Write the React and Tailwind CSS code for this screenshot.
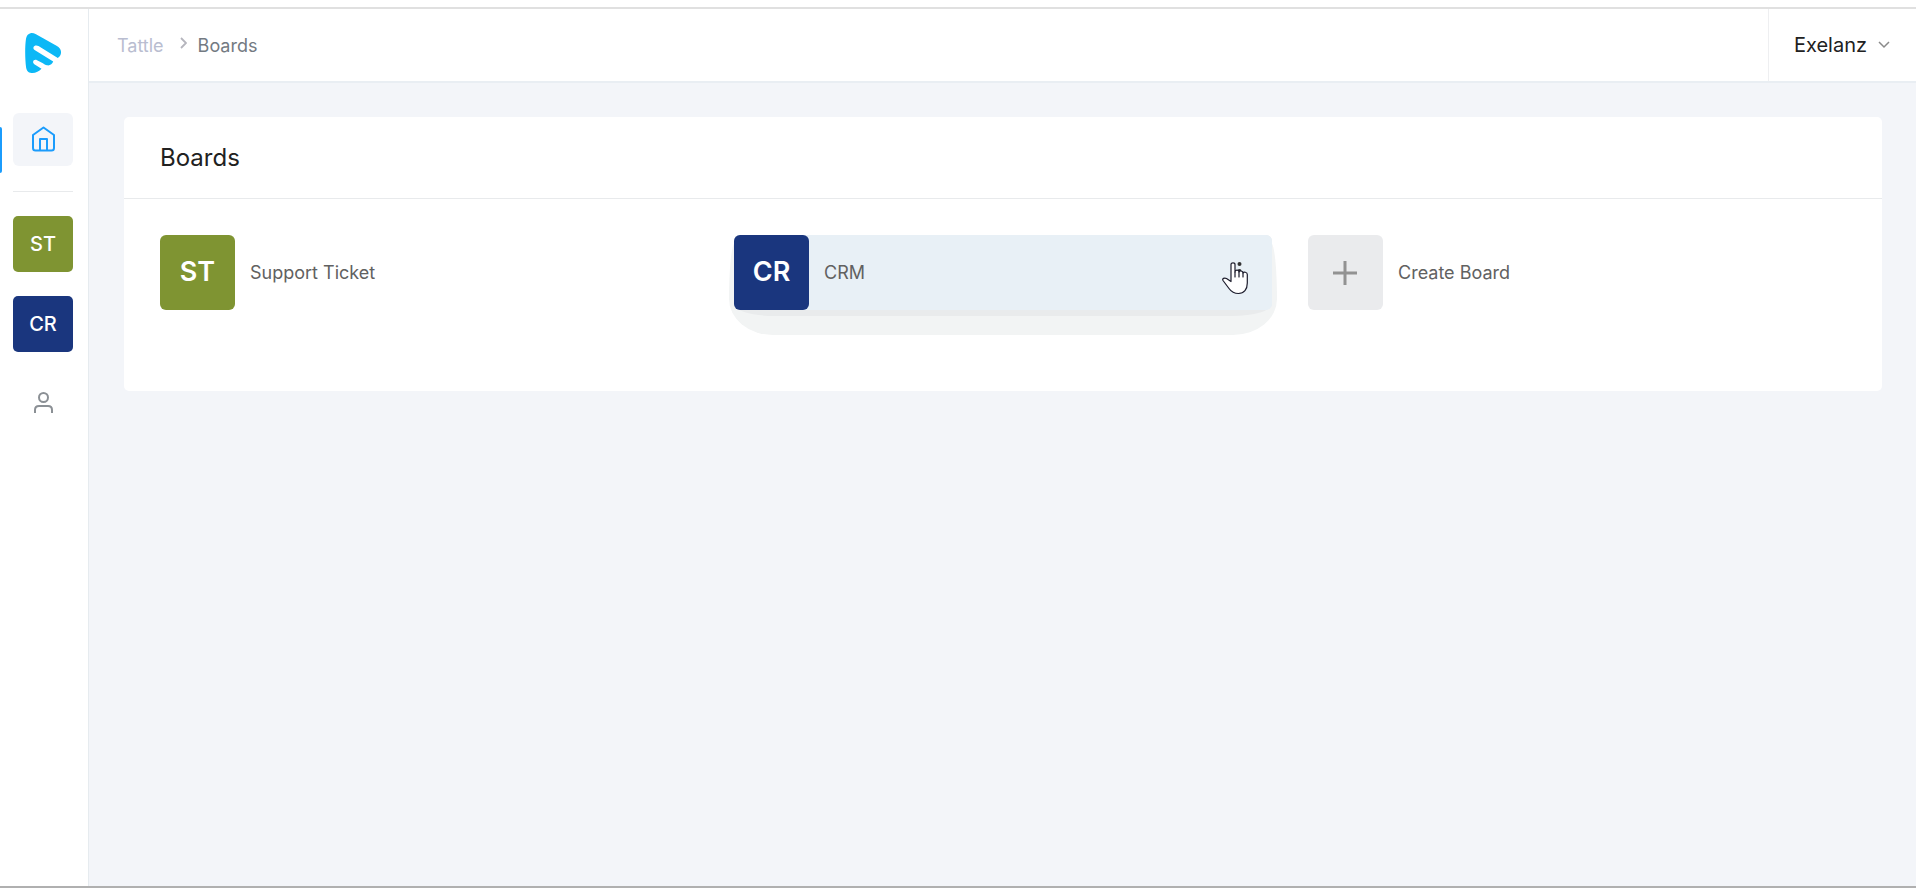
const boards = [
  { id: 1, short: 'ST', name: 'Support Ticket', color: 'bg-[#7f9432]' },
  { id: 2, short: 'CR', name: 'CRM', color: 'bg-[#1a367e]', active: true },
]

function Logo() {
  return (
    <svg width="36" height="40" viewBox="0 0 36 40" aria-hidden="true">
      <path
        fill="#0cb8f6"
        d="M5.500 0.200 C7 -0.200 9 0.200 11 1.300 L31.500 12.800 C35 14.800 36.200 17 36 20 C35.800 22.300 34.500 24 32.800 24.900 L13.500 13 C11.500 11.900 9 12.400 8.500 14.300 C8.200 15.600 8.800 16.500 10 17.300 L28.200 28.600 C27.300 31 24.800 33 22 32.300 C20.500 32 19 31 17.500 30 L12 27.200 C10 26.300 8.200 27.200 8.100 29 C8.100 30 8.700 30.800 9.700 31.500 L16.500 35.700 C14 38.300 10 40.200 6.500 40 C3 39.800 1.600 37.500 1.100 34.500 C0 26 -0.200 14 1 5.800 C1.500 2.700 3 0.700 5.500 0.200 Z"
      />
    </svg>
  )
}

function HomeIcon() {
  return (
    <svg width="23" height="27" viewBox="0 0 23 27" fill="none" stroke="#1b9cfc" strokeWidth="2" strokeLinejoin="round" aria-hidden="true">
      <path d="M1 9 L11.500 1.500 L22 9 V22 Q22 24.500 19.500 24.500 H3.500 Q1 24.500 1 22 Z" />
      <path d="M8 24 V13 H15 V24" />
    </svg>
  )
}

function UserIcon() {
  return (
    <svg width="19" height="22" viewBox="0 0 19 22" fill="none" stroke="#8b9095" strokeWidth="2" aria-hidden="true">
      <circle cx="9.500" cy="5.500" r="4.500" />
      <path d="M1 21 V18 Q1 14 5 14 H14 Q18 14 18 18 V21" />
    </svg>
  )
}

function PlusIcon() {
  return (
    <svg width="25" height="25" viewBox="0 0 25 25" stroke="#929292" strokeWidth="3" aria-hidden="true">
      <path d="M12 1 V25 M0 13 H24" />
    </svg>
  )
}

function HandCursor() {
  return (
    <svg className="absolute right-6 top-[27px]" width="26" height="33" viewBox="0 0 26 33" aria-hidden="true">
      <circle cx="17.500" cy="2" r="2" fill="#333" />
      <circle cx="17.500" cy="9" r="2" fill="#333" />
      <path
        fill="#fff"
        stroke="#1b1b2b"
        strokeWidth="1.200"
        strokeLinejoin="round"
        strokeLinecap="round"
        d="M9 19.500 V2.500 C9 0.200 13 0.200 13 2.500 V10 C13 7.500 17 7.500 17 10 C17 8.500 21 8.500 21 11 C21.500 9.500 25.300 10 25.300 12.500 V21 C25.300 27.500 22 31.500 16.500 31.500 C12.500 31.500 9.500 30 7 26.500 L1 18.500 C-0.200 16.500 2.500 15.500 4.500 16.500 Z"
      />
      <path stroke="#1b1b2b" strokeWidth="1.200" strokeLinecap="round" d="M13 10 V15 M17 10 V15 M21 11 V15" />
    </svg>
  )
}

function Sidebar() {
  return (
    <aside className="w-[89px] shrink-0 flex flex-col bg-white border-r border-[#e6ebef] pl-[13px] pr-[15px] pt-6">
      <a href="#" aria-label="Tattle" className="pl-3">
        <Logo />
      </a>
      <nav className="relative mt-10 flex flex-col">
        <span className="absolute -left-[13px] top-[14px] w-0.5 h-[46px] rounded-r-sm bg-[#1b9cfc]" />
        <a href="#" aria-label="Home" className="h-[53px] flex items-center justify-center rounded-md bg-[#f3f5f9]">
          <HomeIcon />
        </a>
        <hr className="mt-[25px] border-[#e8eaec]" />
        <div className="mt-6 flex flex-col gap-6">
          {boards.map((b) => (
            <a key={b.id} href="#" className={`h-14 flex items-center justify-center rounded-[5px] text-xl font-medium text-white ${b.color}`}>
              {b.short}
            </a>
          ))}
        </div>
        <a href="#" aria-label="Profile" className="mt-10 flex justify-center">
          <UserIcon />
        </a>
      </nav>
    </aside>
  )
}

function Header() {
  return (
    <header className="h-[74px] flex bg-white border-b-2 border-[#e9eef3]">
      <nav aria-label="Breadcrumb" className="flex-1 flex items-center pl-7 pt-0.5 text-lg">
        <a href="#" className="text-[#b9bdd0]">Tattle</a>
        <svg className="ml-4 mr-[11px] mb-1.5" width="7" height="12" viewBox="0 0 7 12" fill="none" stroke="#b5b5bd" strokeWidth="1.800" aria-hidden="true">
          <path d="M1 1 L6 6 L1 11" />
        </svg>
        <span className="text-[#737a82]">Boards</span>
      </nav>
      <button type="button" className="flex items-center gap-[11px] border-l border-[#eeeff1] pl-[25px] pr-[26px] text-xl text-[#212121]">
        Exelanz
        <svg width="12" height="8" viewBox="0 0 12 8" fill="none" stroke="#8a8a8a" strokeWidth="1.500" aria-hidden="true">
          <path d="M1 1 L6 6 L11 1" />
        </svg>
      </button>
    </header>
  )
}

// two flat layers under the hovered tile
function TileShadow() {
  return (
    <>
      <span className="absolute -z-10 -inset-x-[5px] top-2 -bottom-[25px] rounded-[6px_6px_44px_44px/56px_56px_36px_36px] bg-[#f2f4f4]" />
      <span className="absolute -z-10 inset-x-0 top-0 -bottom-1.5 rounded-[6px_6px_40px_40px/6px_6px_12px_12px] bg-[#e9ebec]" />
      <span className="absolute -z-10 inset-0 rounded-md bg-[#e8f0f6]" />
    </>
  )
}

export default function App() {
  return (
    <div className="min-h-screen flex flex-col bg-[#f3f5f9] font-['Inter',sans-serif]">
      <div className="h-[9px] shrink-0 bg-white border-b-2 border-[#e0e0e0]" />
      <div className="flex-1 flex">
        <Sidebar />
        <div className="flex-1 flex flex-col">
          <Header />
          <main className="pl-[35px] pr-[34px] pt-[34px]">
            <section className="rounded-[5px] bg-white">
              <h1 className="h-[82px] flex items-center px-9 border-b border-[#e8eaec] text-2xl text-[#212121]">Boards</h1>
              <div className="grid grid-cols-3 gap-9 px-9 pt-9 pb-[81px]">
                {boards.map((b) => (
                  <a key={b.id} href="#" className="relative isolate flex items-center gap-[15px]">
                    {b.active && <TileShadow />}
                    <span className={`size-[75px] flex items-center justify-center rounded-md text-[27px] font-semibold text-white ${b.color}`}>
                      {b.short}
                    </span>
                    <span className="text-lg text-[#616161]">{b.name}</span>
                    {b.active && <HandCursor />}
                  </a>
                ))}
                <button type="button" className="flex items-center gap-[15px] text-left">
                  <span className="size-[75px] flex items-center justify-center rounded-md bg-[#eaebed]">
                    <PlusIcon />
                  </span>
                  <span className="text-lg text-[#616161]">Create Board</span>
                </button>
              </div>
            </section>
          </main>
        </div>
      </div>
      <div className="h-0.5 shrink-0 bg-[#b0b0b0]" />
    </div>
  )
}
